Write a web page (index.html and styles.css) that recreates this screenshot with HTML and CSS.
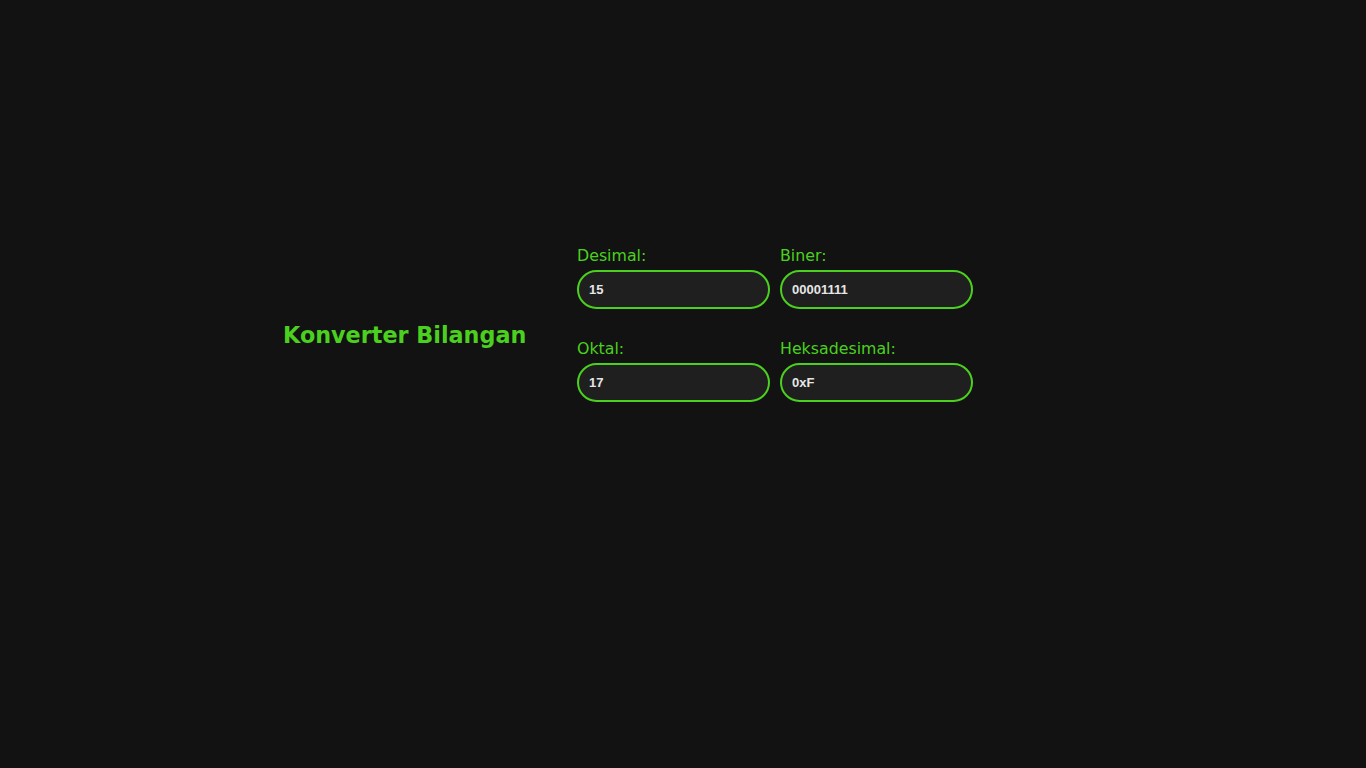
FILE: index.html
```html
<!DOCTYPE html>
<html lang="id">
<head>
<meta charset="utf-8">
<title>Konverter Bilangan</title>
<link rel="stylesheet" href="styles.css">
</head>
<body>
<main class="wrap">
  <h1 class="title">Konverter Bilangan</h1>
  <div class="grid">
    <div class="field">
      <label class="label" for="dec">Desimal:</label>
      <input class="input" id="dec" type="text" value="15">
    </div>
    <div class="field">
      <label class="label" for="bin">Biner:</label>
      <input class="input" id="bin" type="text" value="00001111">
    </div>
    <div class="field">
      <label class="label" for="oct">Oktal:</label>
      <input class="input" id="oct" type="text" value="17">
    </div>
    <div class="field">
      <label class="label" for="hex">Heksadesimal:</label>
      <input class="input" id="hex" type="text" value="0xF">
    </div>
  </div>
</main>
</body>
</html>
```
FILE: styles.css
```css
html, body {
  margin: 0;
  padding: 0;
  background: #121212;
  height: 100%;
}
body {
  font-family: "DejaVu Sans", "Open Sans", sans-serif;
  color: #4bd01f;
}
.wrap {
  display: flex;
  align-items: center;
  padding: 246px 0 0 283px;
  gap: 0;
}
.title {
  flex: 0 0 294px;
  white-space: nowrap;
  margin: 22px 0 0 0;
  font-size: 22.3px;
  font-weight: bold;
  color: #4bd01f;
  line-height: 1.2;
}
.grid {
  display: grid;
  grid-template-columns: 193px 193px;
  column-gap: 10px;
  row-gap: 30px;
}
.field {
  display: flex;
  flex-direction: column;
}
.label {
  font-size: 15.8px;
  line-height: 19px;
  margin-bottom: 5px;
  color: #4bd01f;
}
.input {
  box-sizing: border-box;
  width: 193px;
  height: 39px;
  border: 2px solid #4bd01f;
  border-radius: 20px;
  background: #1f1f1f;
  color: #e6e6e6;
  font-family: "Liberation Sans", Arial, sans-serif;
  font-size: 13px;
  font-weight: bold;
  padding: 0 10px;
  outline: none;
}
```
